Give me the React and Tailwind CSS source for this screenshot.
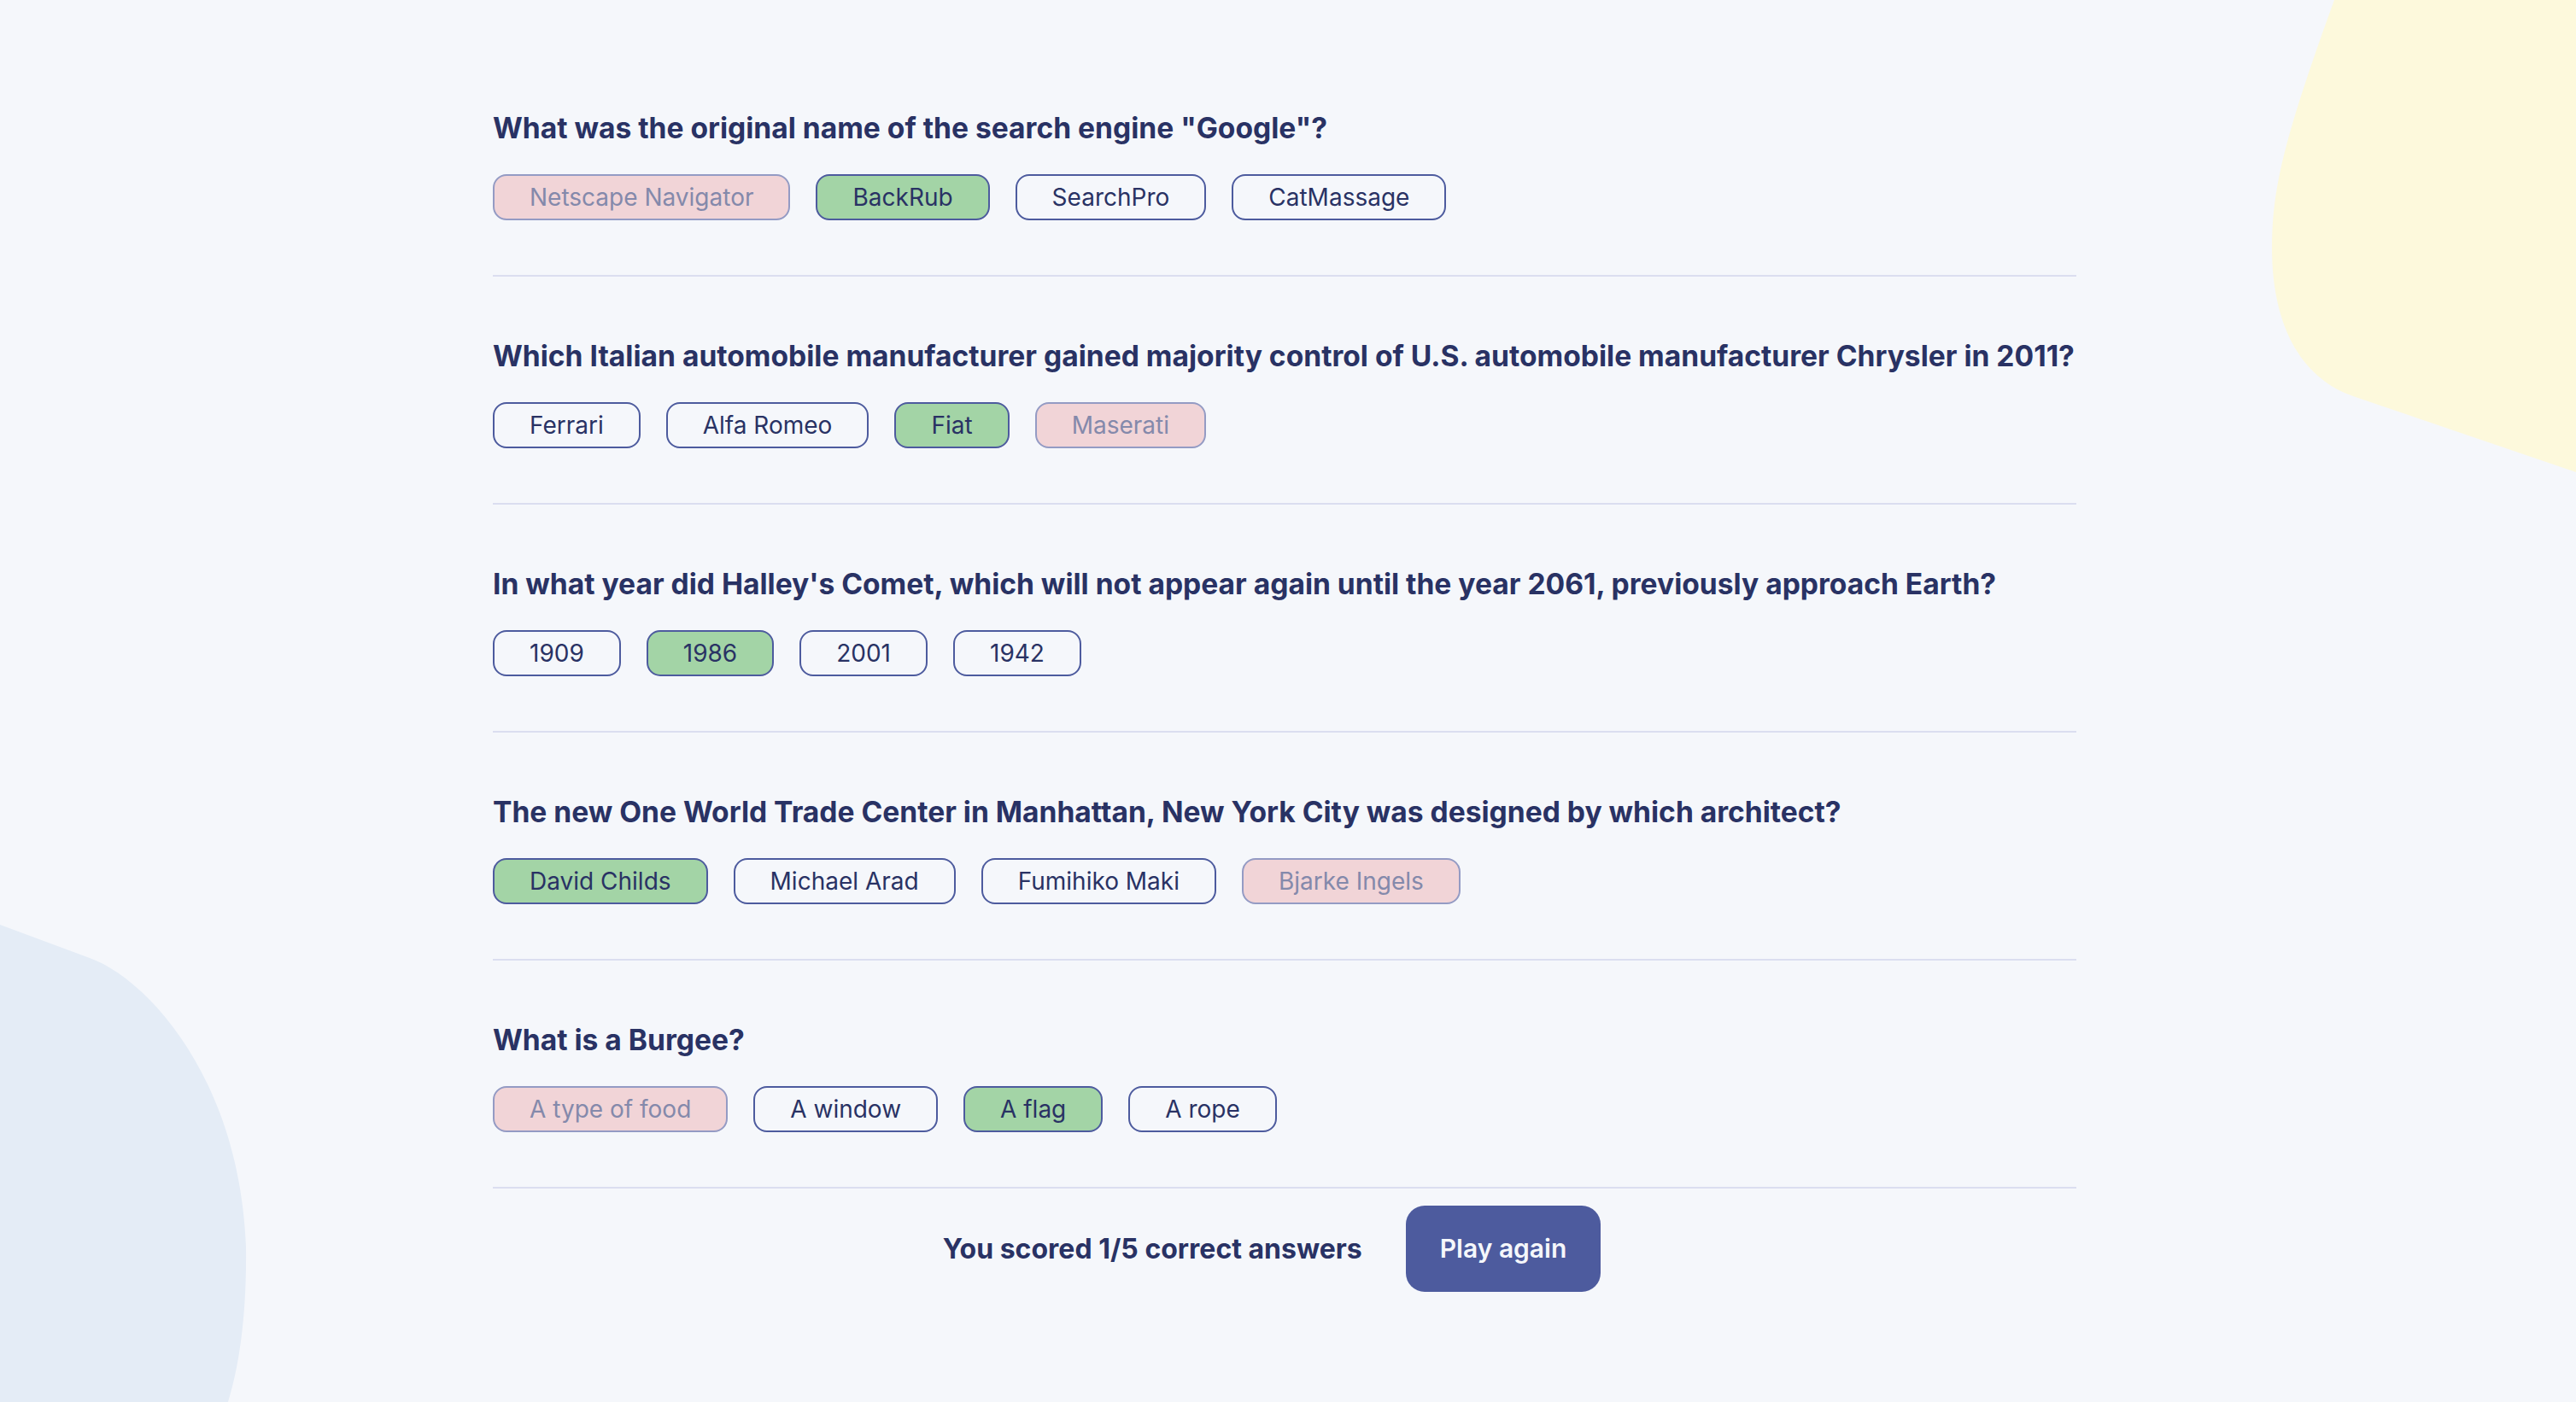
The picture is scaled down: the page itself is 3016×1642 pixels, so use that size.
import React from "react";

const questions = [
  {
    q: 'What was the original name of the search engine "Google"?',
    a: [
      { t: "Netscape Navigator", s: "wrong" },
      { t: "BackRub", s: "right" },
      { t: "SearchPro", s: "none" },
      { t: "CatMassage", s: "none" },
    ],
  },
  {
    q: "Which Italian automobile manufacturer gained majority control of U.S. automobile manufacturer Chrysler in 2011?",
    a: [
      { t: "Ferrari", s: "none" },
      { t: "Alfa Romeo", s: "none" },
      { t: "Fiat", s: "right" },
      { t: "Maserati", s: "wrong" },
    ],
  },
  {
    q: "In what year did Halley's Comet, which will not appear again until the year 2061, previously approach Earth?",
    a: [
      { t: "1909", s: "none" },
      { t: "1986", s: "right" },
      { t: "2001", s: "none" },
      { t: "1942", s: "none" },
    ],
  },
  {
    q: "The new One World Trade Center in Manhattan, New York City was designed by which architect?",
    a: [
      { t: "David Childs", s: "right" },
      { t: "Michael Arad", s: "none" },
      { t: "Fumihiko Maki", s: "none" },
      { t: "Bjarke Ingels", s: "wrong" },
    ],
  },
  {
    q: "What is a Burgee?",
    a: [
      { t: "A type of food", s: "wrong" },
      { t: "A window", s: "none" },
      { t: "A flag", s: "right" },
      { t: "A rope", s: "none" },
    ],
  },
];

function Answer({ t, s }) {
  const cls =
    s === "right"
      ? "bg-[#A3D4A6] border-[#4D5B9E] text-[#293264]"
      : s === "wrong"
      ? "bg-[#F1D4D7] border-[#949BC4] text-[#8489AB]"
      : "bg-transparent border-[#4D5B9E] text-[#293264]";
  return (
    <div
      className={
        "h-[54px] px-[41px] flex items-center rounded-[16px] border-2 text-[28px] leading-none " +
        cls
      }
    >
      {t}
    </div>
  );
}

export default function App() {
  return (
    <div
      className="relative min-h-[1642px] w-full overflow-hidden bg-[#F5F7FB]"
      style={{ fontFamily: "Inter, 'Noto Sans', sans-serif" }}
    >
      <svg
        className="absolute left-0 top-0 pointer-events-none"
        width="3016"
        height="1642"
        viewBox="0 0 3016 1642"
      >
        <path
          d="M2733,0 L3016,0 L3016,553 L2755,464 C2700,445 2660,390 2660,290 C2660,220 2675,160 2733,0 Z"
          fill="#FDF9DC"
        />
        <path
          d="M0,1083 L105,1122 C170,1145 280,1260 288,1460 C289,1540 280,1600 267,1642 L0,1642 Z"
          fill="#E4ECF6"
        />
      </svg>

      <div className="relative pl-[577px] pt-[131px]">
        <div className="w-[1854px]">
          {questions.map((item, i) => (
            <div key={i} className="flex flex-col">
              <h2 className="text-[33.6px] leading-[38px] font-bold text-[#293264] whitespace-nowrap">
                {item.q}
              </h2>
              <div className="mt-[35px] flex gap-[30px]">
                {item.a.map((a, j) => (
                  <Answer key={j} {...a} />
                ))}
              </div>
              <div className="mt-[64px] h-[2px] bg-[#DBDEF0]" />
              {i < questions.length - 1 && <div className="h-[74px]" />}
            </div>
          ))}
          <div className="mt-[20px] flex items-center justify-center gap-[51px] pr-[30px]">
            <span className="text-[32px] font-bold text-[#293264]">
              You scored 1/5 correct answers
            </span>
            <button className="h-[101px] px-[40px] rounded-[22px] bg-[#4D5B9E] text-[#F5F7FB] text-[30px] font-semibold">
              Play again
            </button>
          </div>
        </div>
      </div>
    </div>
  );
}
